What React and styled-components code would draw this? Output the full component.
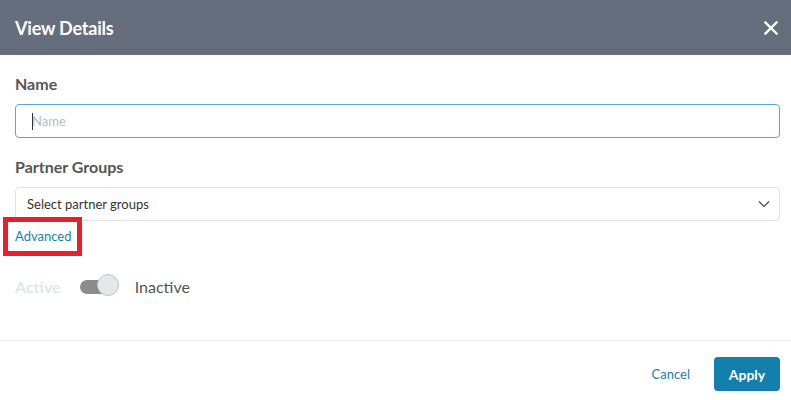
import styled, { createGlobalStyle } from 'styled-components';

const GlobalStyle = createGlobalStyle`
  html, body {
    margin: 0;
    padding: 0;
    background: #ffffff;
  }
  body {
    font-family: Lato, "Open Sans", sans-serif;
  }
`;

const Modal = styled.div`
  width: 791px;
  height: 400px;
  background: #ffffff;
  display: flex;
  flex-direction: column;
`;

const Header = styled.div`
  height: 55px;
  background-color: #646e7c;
  display: flex;
  align-items: center;
  justify-content: space-between;
  padding: 0 10px 0 15px;
  box-sizing: border-box;
`;

const Title = styled.h2`
  margin: 0;
  color: #ffffff;
  font-size: 18px;
  font-weight: 700;
  letter-spacing: -0.2px;
`;

const CloseButton = styled.button`
  border: none;
  background: none;
  padding: 0;
  width: 20px;
  height: 20px;
  display: flex;
  align-items: center;
  justify-content: center;
  cursor: pointer;
`;

const Body = styled.div`
  padding: 19px 11px 0 15px;
  display: flex;
  flex-direction: column;
  height: 286px;
  box-sizing: border-box;
  border-bottom: 1px solid #e8e8e8;
`;

const Label = styled.label`
  display: block;
  font-size: 16px;
  line-height: 20px;
  font-weight: 700;
  color: #555555;
  margin-top: ${(p) => p.$top || 0}px;
`;

const InputWrap = styled.div`
  position: relative;
  margin-top: 10px;
`;

const TextInput = styled.input`
  width: 100%;
  height: 34px;
  box-sizing: border-box;
  border: 1px solid #5aa6e0;
  border-radius: 4px;
  padding: 0 16px;
  font-family: Lato, sans-serif;
  font-size: 13px;
  color: #333;
  outline: none;
  &::placeholder {
    color: #b5bcc8;
  }
`;

const Caret = styled.span`
  position: absolute;
  left: 17px;
  top: 9px;
  width: 1px;
  height: 17px;
  background: #333;
`;

const Select = styled.div`
  margin-top: 10px;
  height: 34px;
  box-sizing: border-box;
  border: 1px solid #dde5e7;
  border-radius: 4px;
  display: flex;
  align-items: center;
  justify-content: space-between;
  padding: 0 9px 0 11px;
  font-size: 13px;
  color: #333333;
`;

const LinkWrap = styled.div`
  margin-top: 7px;
  align-self: flex-start;
  position: relative;
  &::after {
    content: '';
    position: absolute;
    left: -12px;
    top: -11px;
    right: -11px;
    bottom: -12px;
    border: 5px solid #e5202a;
  }
`;

const Link = styled.a`
  font-size: 13px;
  line-height: 16px;
  color: #1a7fb0;
  text-decoration: none;
  display: block;
`;

const ToggleRow = styled.div`
  margin-top: 31px;
  display: flex;
  align-items: center;
  height: 22px;
`;

const StateLabel = styled.span`
  font-size: 16px;
  color: ${(p) => (p.$muted ? '#dfe7ea' : '#555555')};
  font-weight: ${(p) => (p.$muted ? 700 : 400)};
`;

const Switch = styled.div`
  position: relative;
  width: 39px;
  height: 22px;
  margin: 0 16px 0 19px;
`;

const Track = styled.div`
  position: absolute;
  left: 0;
  top: 5px;
  width: 34px;
  height: 14px;
  border-radius: 7px;
  background: #8c8c8c;
`;

const Knob = styled.div`
  position: absolute;
  right: 0;
  top: -1px;
  width: 20px;
  height: 20px;
  border-radius: 50%;
  background: #e2e8ec;
  border: 1px solid #bfc4c9;
`;

const Footer = styled.div`
  display: flex;
  justify-content: flex-end;
  align-items: center;
  gap: 24px;
  padding: 16px 11px 0 0;
`;

const TextButton = styled.button`
  border: none;
  background: none;
  padding: 0;
  font-family: Lato, sans-serif;
  font-size: 13px;
  color: #1a7fb0;
  cursor: pointer;
`;

const PrimaryButton = styled.button`
  border: none;
  background: #127fac;
  color: #ffffff;
  border-radius: 4px;
  height: 34px;
  width: 66px;
  font-family: Lato, sans-serif;
  font-size: 14px;
  font-weight: 700;
  cursor: pointer;
`;

export default function App() {
  return (
    <>
      <GlobalStyle />
      <Modal>
        <Header>
          <Title>View Details</Title>
          <CloseButton aria-label="Close">
            <svg width="14" height="14" viewBox="0 0 14 14">
              <path d="M1.5 1.5L12.5 12.5M12.5 1.5L1.5 12.5" stroke="#ffffff" strokeWidth="2.4" strokeLinecap="square" />
            </svg>
          </CloseButton>
        </Header>
        <Body>
          <Label>Name</Label>
          <InputWrap>
            <TextInput placeholder="Name" />
            <Caret />
          </InputWrap>
          <Label $top={19}>Partner Groups</Label>
          <Select>
            <span>Select partner groups</span>
            <svg width="12" height="8" viewBox="0 0 12 8">
              <path d="M1 1.5L6 6.5L11 1.5" fill="none" stroke="#444" strokeWidth="1.1" />
            </svg>
          </Select>
          <LinkWrap>
            <Link href="#">Advanced</Link>
          </LinkWrap>
          <ToggleRow>
            <StateLabel $muted>Active</StateLabel>
            <Switch>
              <Track />
              <Knob />
            </Switch>
            <StateLabel>Inactive</StateLabel>
          </ToggleRow>
        </Body>
        <Footer>
          <TextButton>Cancel</TextButton>
          <PrimaryButton>Apply</PrimaryButton>
        </Footer>
      </Modal>
    </>
  );
}
